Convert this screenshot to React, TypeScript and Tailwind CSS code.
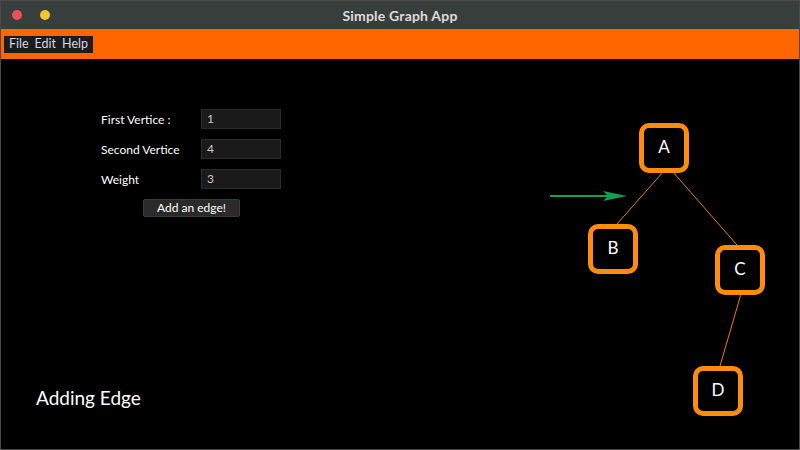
import React from "react";

const fields = [
  { label: "First Vertice :", value: "1" },
  { label: "Second Vertice", value: "4" },
  { label: "Weight", value: "3" },
];

// canvas origin sits at (1, 59) on the page
const nodes = [
  { id: "A", x: 638, y: 64 },
  { id: "B", x: 587, y: 165 },
  { id: "C", x: 714, y: 186 },
  { id: "D", x: 692, y: 307 },
];

const edges = [
  [663, 172, 617, 224],
  [673, 172, 737, 245],
  [741, 294, 720, 366],
];

export default function App() {
  return (
    <div
      className="w-[800px] h-[450px] flex flex-col bg-black border border-[#4a4a4a] overflow-hidden"
      style={{ fontFamily: "Lato, 'Open Sans', sans-serif" }}
    >
      {/* Title bar */}
      <div className="relative h-[28px] shrink-0 bg-[#383e3c] flex items-center justify-center">
        <div className="absolute left-[11px] top-[9px] flex gap-[18px]">
          <span className="w-[10px] h-[10px] rounded-full bg-[#f04e5b]" />
          <span className="w-[10px] h-[10px] rounded-full bg-[#f5c431]" />
        </div>
        <span className="text-[14px] font-bold text-[#dcdcdc] tracking-[0.2px]">Simple Graph App</span>
      </div>

      {/* Menu bar */}
      <div className="h-[30px] shrink-0 bg-[#ff6600] flex items-center px-[3px]">
        <div className="flex gap-[6px] bg-[#1c1c1c] px-[5px] h-[17px] items-center text-[12.5px] text-[#d6d6e6]">
          <span>File</span>
          <span>Edit</span>
          <span>Help</span>
        </div>
      </div>

      {/* Canvas */}
      <div className="relative flex-1">
        {/* Form */}
        <div className="absolute left-[100px] top-[50px] flex flex-col gap-[10px] text-[12px] text-white">
          {fields.map((f) => (
            <div key={f.label} className="flex items-center">
              <span className="w-[100px] pt-[1px]">{f.label}</span>
              <div className="w-[80px] h-[20px] bg-[#1a1a1a] border border-[#2c2c2c] flex items-center px-[5px] text-[#c8c8c8]">
                {f.value}
              </div>
            </div>
          ))}
          <div className="flex pl-[42px]">
            <button className="w-[97px] h-[18px] bg-[#2a2a2a] border border-[#3a3a3a] rounded-[2px] text-[12px] text-white leading-none">
              Add an edge!
            </button>
          </div>
        </div>

        {/* Edges and arrow */}
        <svg className="absolute left-[-1px] top-[-59px]" width="800" height="450">
          {edges.map((e, i) => (
            <line key={i} x1={e[0]} y1={e[1]} x2={e[2]} y2={e[3]} stroke="#e8810c" strokeWidth="1" />
          ))}
          <line x1="550" y1="196" x2="612" y2="196" stroke="#10a050" strokeWidth="2" />
          <path d="M603 191 L627 196 L603 201 L608 196 Z" fill="#10a050" />
        </svg>

        {/* Nodes */}
        {nodes.map((n) => (
          <div
            key={n.id}
            className="absolute w-[50px] h-[50px] rounded-[10px] border-[5px] border-[#ff8c0a] bg-black flex items-center justify-center pb-[3px] text-[17px] text-white"
            style={{ left: n.x, top: n.y }}
          >
            {n.id}
          </div>
        ))}

        <div className="absolute left-[35px] top-[325px] text-[19px] text-white">Adding Edge</div>
      </div>
    </div>
  );
}
